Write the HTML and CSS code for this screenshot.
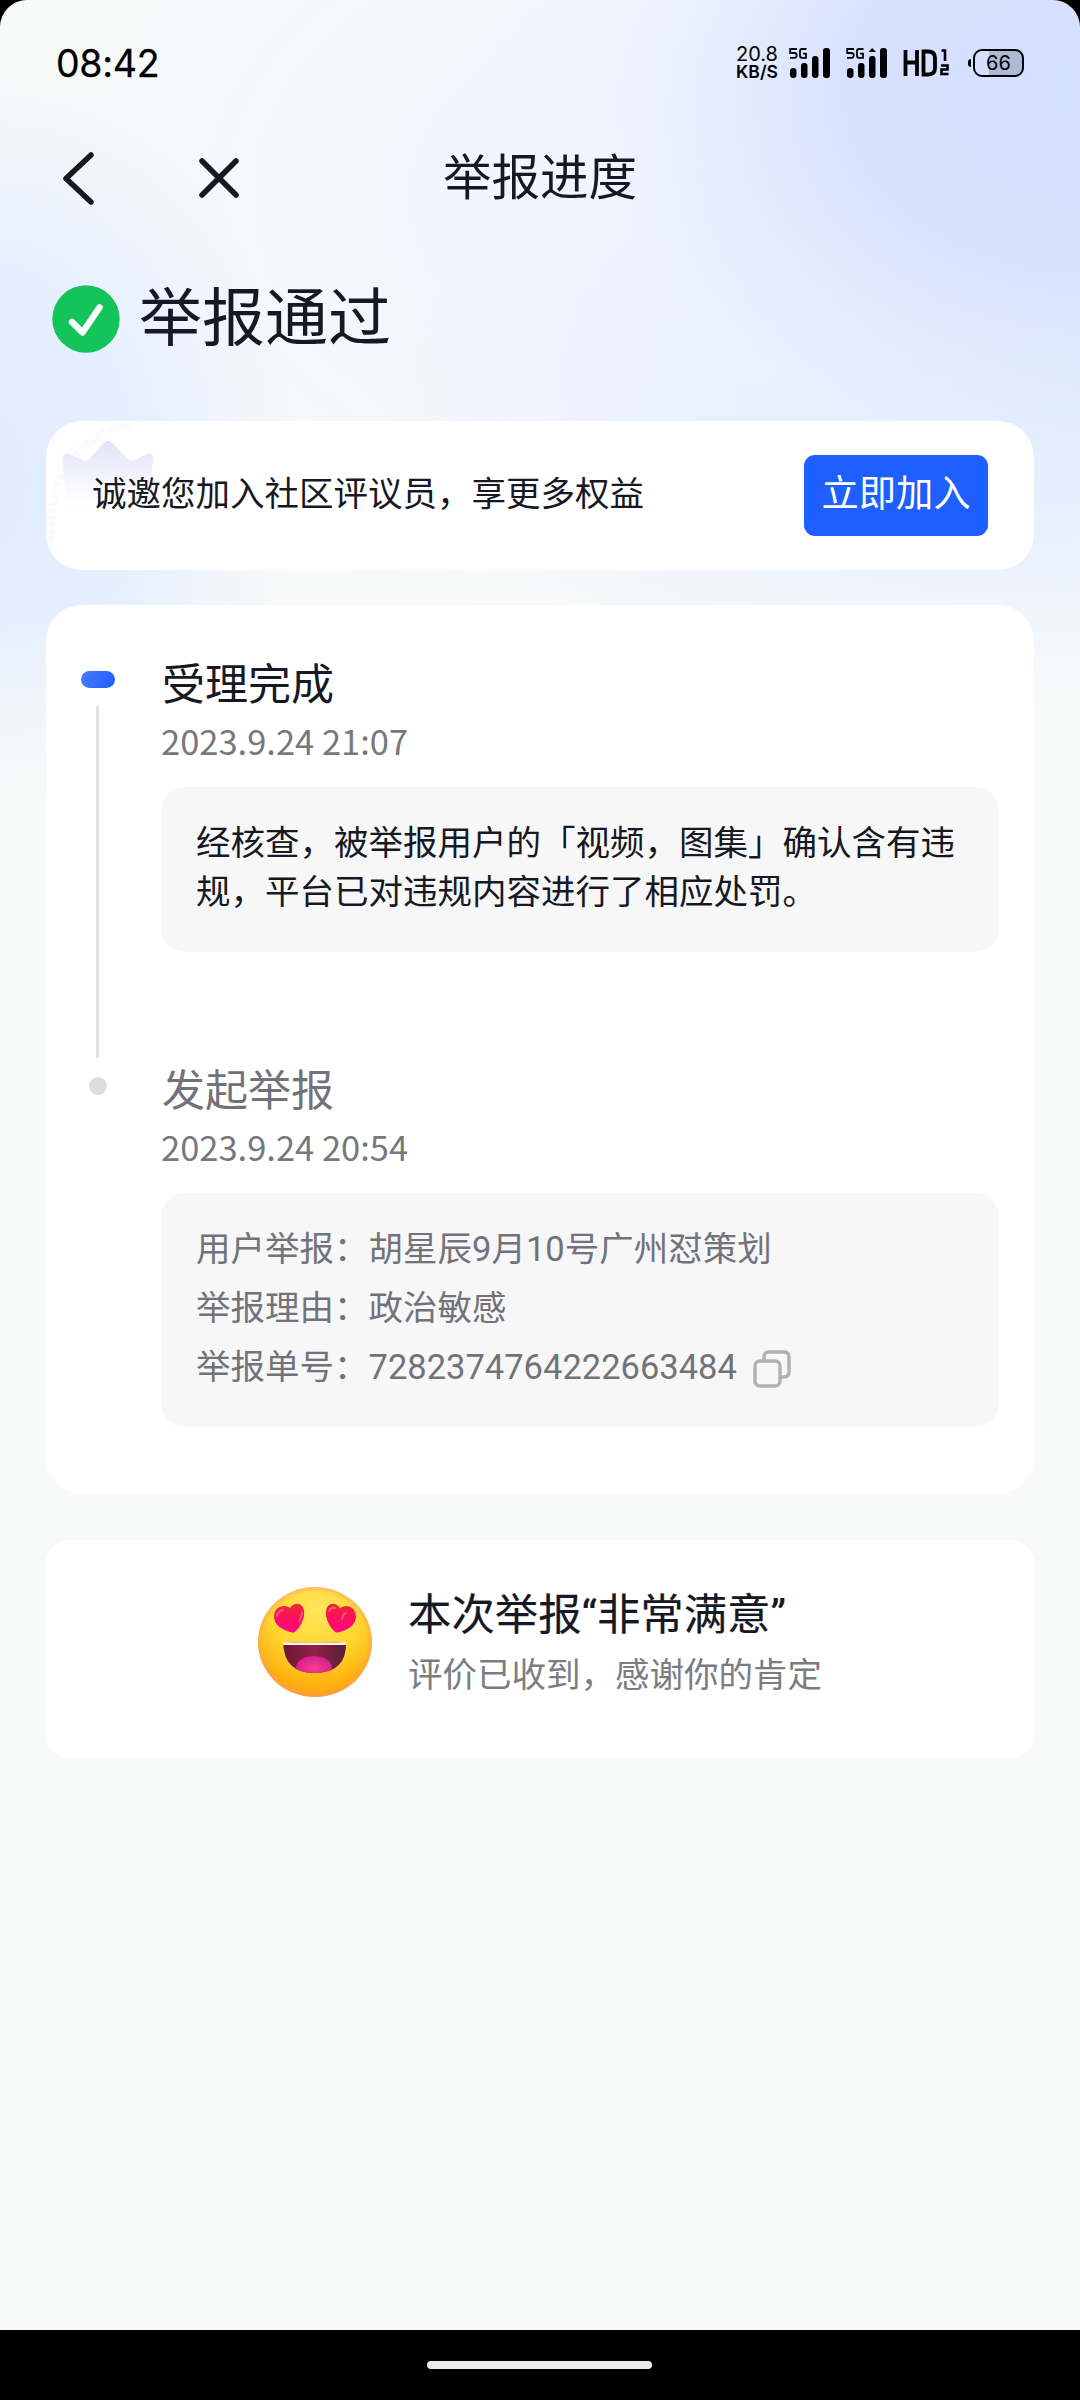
FILE: index.html
```html
<!DOCTYPE html>
<html lang="zh-CN">
<head>
<meta charset="utf-8">
<title>举报进度</title>
<link rel="stylesheet" href="styles.css">
</head>
<body>
<div class="phone">
  <div class="screen">
    <header class="status">
      <span class="clock">08:42</span>
      <div class="status-right">
        <div class="speed"><span class="speed-num">20.8</span><span class="speed-unit">KB/S</span></div>
        <svg class="signal" width="42" height="32" viewBox="0 0 42 32" fill="#000">
          <path d="M8 2H1.2V6H5.5Q7.7 6 7.7 8.3Q7.7 10.8 5.5 10.8H1M17.5 2H13Q11 2 11 4V8.800Q11 10.800 13 10.800H17V6.600H14" fill="none" stroke="#000" stroke-width="1.800"/>
          <rect x="1" y="21" width="6.500" height="10" rx="3.200"/><rect x="12" y="16" width="6.500" height="15" rx="3"/><rect x="23" y="9" width="6.500" height="22" rx="3"/><rect x="34" y="1" width="7" height="30" rx="3"/>
        </svg>
        <svg class="signal second" width="42" height="32" viewBox="0 0 42 32" fill="#000">
          <path d="M8 2H1.2V6H5.5Q7.7 6 7.7 8.3Q7.7 10.8 5.5 10.8H1M17.5 2H13Q11 2 11 4V8.800Q11 10.800 13 10.800H17V6.600H14" fill="none" stroke="#000" stroke-width="1.800"/>
          <rect x="1" y="21" width="6.500" height="10" rx="3.200"/><rect x="12" y="16" width="6.500" height="15" rx="3"/><rect x="23" y="9" width="6.500" height="22" rx="3"/><rect x="34" y="1" width="7" height="30" rx="3"/><path d="M22.500 5L26.200 1L30 5Z"/>
        </svg>
        <svg class="hd" width="47" height="30" viewBox="0 0 47 30" fill="none" stroke="#000">
          <path d="M2.500 2V28M14 2V28M2.500 14.500H14M20.500 3.500V26.500H25Q32 26.500 32 20V10Q32 3.500 25 3.500Z" stroke-width="3.800"/>
          <path d="M38.500 2.500H42V13M38 17.500H44.500V21.500H38.500V26H45.500" stroke-width="2.600"/>
        </svg>
        <div class="battery"><span class="battery-tip"></span><span class="battery-body">66</span></div>
      </div>
    </header>

    <nav class="bar">
      <div class="bar-side">
        <svg width="32" height="56" viewBox="0 0 32 56"><path d="M29 5L4 28.500L29 52" fill="none" stroke="#161823" stroke-width="5.500" stroke-linecap="round" stroke-linejoin="round"/></svg>
        <svg width="44" height="44" viewBox="0 0 44 44"><path d="M5 5L39 39M39 5L5 39" fill="none" stroke="#161823" stroke-width="5.500" stroke-linecap="round"/></svg>
      </div>
      <h1 class="bar-title">举报进度</h1>
      <div class="bar-side"></div>
    </nav>

    <section class="result">
      <svg width="68" height="68" viewBox="0 0 68 68"><circle cx="34" cy="34" r="33.700" fill="#15c35b"/><path d="M20 37L30.500 47.500L47.500 22.500" fill="none" stroke="#fff" stroke-width="6.500" stroke-linecap="round" stroke-linejoin="round"/></svg>
      <h2 class="result-title">举报通过</h2>
    </section>

    <main class="cards">
      <section class="card invite">
        <svg class="crown" width="110" height="130" viewBox="0 0 110 130">
          <defs><linearGradient id="crown" x1="0" y1="0" x2="0" y2="1"><stop offset="0" stop-color="#e0e4f7"/><stop offset=".5" stop-color="#f3f4fd"/><stop offset="1" stop-color="#fff" stop-opacity="0"/></linearGradient></defs>
          <path d="M4 120Q0 50 52 15Q65 6 85 5" fill="none" stroke="#fafbff" stroke-width="8" stroke-dasharray="5 2"/>
          <path d="M17 37Q17 31 23 33L36 39Q41 41 44 37L57 23Q62 17 67 23L81 37Q84 41 89 39L101 33Q107 31 107 37L104 95H20Z" fill="url(#crown)"/>
        </svg>
        <p class="invite-text">诚邀您加入社区评议员，享更多权益</p>
        <button class="join">立即加入</button>
      </section>

      <section class="card timeline">
        <article class="step active">
          <div class="rail"><span class="pill"></span><span class="line"></span></div>
          <div class="step-body">
            <h3 class="step-title">受理完成</h3>
            <time class="step-time">2023.9.24 21:07</time>
            <div class="box verdict">经核查，被举报用户的「视频，图集」确认含有违规，平台已对违规内容进行了相应处罚。</div>
          </div>
        </article>
        <article class="step">
          <div class="rail"><span class="dot"></span></div>
          <div class="step-body">
            <h3 class="step-title">发起举报</h3>
            <time class="step-time">2023.9.24 20:54</time>
            <div class="box details">
              <p>用户举报：胡星辰9月10号广州怼策划</p>
              <p>举报理由：政治敏感</p>
              <p class="order">举报单号：7282374764222663484
                <svg width="38" height="38" viewBox="0 0 38 38" fill="none" stroke="#b1b1b4" stroke-width="3.400"><rect x="2" y="11" width="25" height="25" rx="5"/><path d="M11 11V7Q11 2 16 2H31Q36 2 36 7V22Q36 27 31 27H27"/></svg>
              </p>
            </div>
          </div>
        </article>
      </section>

      <section class="card rating">
        <svg width="116" height="112" viewBox="0 0 116 112">
          <defs>
            <radialGradient id="face" cx=".52" cy=".2" r=".85"><stop offset="0" stop-color="#ffe65c"/><stop offset=".5" stop-color="#ffd42e"/><stop offset=".82" stop-color="#ffb010"/><stop offset="1" stop-color="#ff9620"/></radialGradient>
            <radialGradient id="rim" cx=".5" cy=".5" r=".5"><stop offset=".9" stop-color="#ff9a50" stop-opacity="0"/><stop offset="1" stop-color="#f79a7c" stop-opacity=".5"/></radialGradient>
            <linearGradient id="heart" x1="0" y1="0" x2="0" y2="1"><stop offset="0" stop-color="#ee2838"/><stop offset=".55" stop-color="#fc0c62"/><stop offset="1" stop-color="#ff0a84"/></linearGradient>
            <linearGradient id="mouth" x1="0" y1="0" x2="1" y2="0"><stop offset="0" stop-color="#6a1830"/><stop offset=".5" stop-color="#942048"/><stop offset="1" stop-color="#4c2230"/></linearGradient>
            <radialGradient id="tongue"><stop offset="0" stop-color="#f84088"/><stop offset="1" stop-color="#d52290"/></radialGradient>
            <clipPath id="lips"><path d="M26 56Q58 58 89 56Q90 87 57 87Q27 87 26 56Z"/></clipPath>
          </defs>
          <ellipse cx="58" cy="56" rx="57" ry="55" fill="url(#face)"/>
          <ellipse cx="58" cy="56" rx="57" ry="55" fill="url(#rim)"/>
          <path d="M35 46.500Q17 42 17 30Q18 20 27 20Q31 20 33 22Q37 17 42 18Q48 20 47 30Q45 39 39 45Q37 47 35 46.500Z" fill="url(#heart)"/>
          <path d="M81 46.500Q99 42 99 30Q98 21 90 20Q86 20 83 22Q79 17 74 18Q68 20 69 30Q71 39 77 45Q79 47 81 46.500Z" fill="url(#heart)"/>
          <path d="M20 30Q21 25 26 24M42 35Q45 31 45 27M72 25Q74 21 78 22M85 33Q85 29 89 27" fill="none" stroke="#ff7890" stroke-width="2" stroke-linecap="round" opacity=".6"/>
          <g clip-path="url(#lips)"><rect x="24" y="54" width="68" height="35" fill="url(#mouth)"/><rect x="24" y="54" width="68" height="5" fill="#fff2f5"/><ellipse cx="57" cy="82" rx="18" ry="12" fill="url(#tongue)"/></g>
        </svg>
        <div class="rating-text">
          <h3 class="rating-title">本次举报“非常满意”</h3>
          <p class="rating-sub">评价已收到，感谢你的肯定</p>
        </div>
      </section>
    </main>
  </div>
  <footer class="home"><span class="home-pill"></span></footer>
</div>
</body>
</html>
```
FILE: styles.css
```css
* { box-sizing: border-box; margin: 0; padding: 0; }
body {
  width: 1080px;
  background: #000;
  color: #161823;
  font-family: "Noto Sans CJK SC", sans-serif;
}
h1, h2, h3 { font-weight: 400; }
svg { display: block; flex: none; }
.phone { height: 2400px; display: flex; flex-direction: column; }
.screen {
  height: 2330px;
  border-radius: 27px 27px 0 0;
  background:
    linear-gradient(180deg, rgba(248,250,249,0) 600px, #f8faf9 810px),
    radial-gradient(ellipse 620px 440px at 1100px 90px, #d4e0ff 0%, rgba(213,225,255,.98) 40%, rgba(220,232,255,.55) 62%, rgba(236,243,255,.2) 82%, rgba(238,243,253,0) 100%),
    radial-gradient(ellipse 700px 300px at 1080px 410px, #dfebff 0%, rgba(226,237,255,.7) 40%, rgba(248,250,249,0) 100%),
    radial-gradient(ellipse 340px 420px at -40px 480px, #dfebff 0%, rgba(224,236,255,.8) 50%, rgba(243,246,252,0) 100%),
    radial-gradient(ellipse 760px 460px at 760px 200px, #eff4fe 0%, #f3f6fd 50%, rgba(248,250,249,0) 100%),
    #f8faf9;
}

.status {
  height: 124px;
  padding: 2px 56px 0 56px;
  display: flex;
  align-items: center;
  justify-content: space-between;
  font-family: Inter, sans-serif;
  color: #000;
}
.clock { font-size: 37.500px; font-weight: 400; letter-spacing: -.3px; -webkit-text-stroke: .3px #000; }
.status-right { display: flex; align-items: center; }
.speed { width: 42px; display: flex; flex-direction: column; align-items: center; line-height: 17px; margin-right: 11px; white-space: nowrap; }
.speed-num { font-size: 20px; }
.speed-unit { font-size: 17.500px; font-weight: 600; }
.signal.second { margin-left: 15px; margin-right: 15px; }
.battery { display: flex; align-items: center; margin-left: 18px; }
.battery-tip { width: 3px; height: 8px; border-radius: 3px 0 0 3px; background: #000; margin-right: 2px; }
.battery-body {
  width: 51px; height: 28px;
  border: 2.500px solid #000; border-radius: 9px;
  background: linear-gradient(90deg, transparent 30%, #aeb9d5 30%);
  font-size: 20px; font-weight: 400; line-height: 24px; text-align: center;
}

.bar { height: 108px; padding: 0 58px; display: flex; align-items: center; }
.bar-side { width: 260px; display: flex; align-items: center; gap: 103px; padding-left: 4px; }
.bar-title { flex: 1; text-align: center; font-size: 48.500px; line-height: 72px; padding-bottom: 8px; }

.result { height: 189px; padding: 53px 52px 0; display: flex; align-items: flex-start; gap: 19px; }
.result-title { font-size: 63px; line-height: 68px; margin-top: -6px; }

.cards { padding: 0 46px; display: flex; flex-direction: column; }
.card { background: #fff; border-radius: 36px; }

.invite { position: relative; height: 149px; padding: 0 46px; display: flex; align-items: center; justify-content: space-between; overflow: hidden; }
.crown { position: absolute; left: 0; top: 0; }
.invite-text { position: relative; font-size: 34.500px; line-height: 50px; padding-bottom: 9px; }
.join {
  width: 184px; height: 81px; padding: 0 0 9px;
  border: 0; border-radius: 11px; background: #1f5eff; color: #fff;
  font-family: inherit; font-size: 37.300px; line-height: 60px; white-space: nowrap;
}

.timeline { margin-top: 35px; height: 889px; padding: 52px 35px 0; }
.step { display: flex; height: 406px; }
.rail { width: 80px; display: flex; flex-direction: column; }
.pill { width: 34px; height: 17px; border-radius: 9px; margin-top: 14px; background: linear-gradient(110deg, #4a79ff, #1f5eff); }
.line { width: 3px; height: 352px; background: #e2e2e2; margin: 18px 0 0 15px; }
.dot { width: 18px; height: 18px; border-radius: 50%; background: #ddd; margin: 14px 0 0 8px; }
.step-body { width: 838px; color: #72737a; }
.step-title { font-size: 43px; line-height: 48px; padding-left: 1px; }
.active .step-title { color: #161823; }
.step-time { display: block; font-size: 34.500px; line-height: 50px; margin-top: 10px; color: #77787d; }
.box { margin-top: 22px; border-radius: 24px; background: #f7f7f8; font-size: 34.500px; }
.verdict { height: 165px; padding: 29px 35px; line-height: 49px; color: #161823; }
.details { height: 234px; padding: 27px 35px; line-height: 59px; font-family: Roboto, "Noto Sans CJK SC", sans-serif; }
.order { display: flex; align-items: center; gap: 16px; }
.order svg { margin-top: 3px; }

.rating { margin-top: 46px; height: 218px; border-radius: 24px; padding: 46px 211px 0; display: flex; gap: 35px; }
.rating-text { white-space: nowrap; padding-top: 5px; font-family: Roboto, "Noto Sans CJK SC", sans-serif; }
.rating-title { font-size: 43.400px; line-height: 50px; font-weight: 400; -webkit-text-stroke: .2px #161823; }
.rating-sub { font-size: 34.500px; line-height: 50px; margin-top: 9px; color: #7b7c82; }

.home { flex: 1; display: flex; justify-content: center; padding: 31px 2px 0 0; background: #000; }
.home-pill { width: 225px; height: 8px; border-radius: 4px; background: #ebebeb; }
```
